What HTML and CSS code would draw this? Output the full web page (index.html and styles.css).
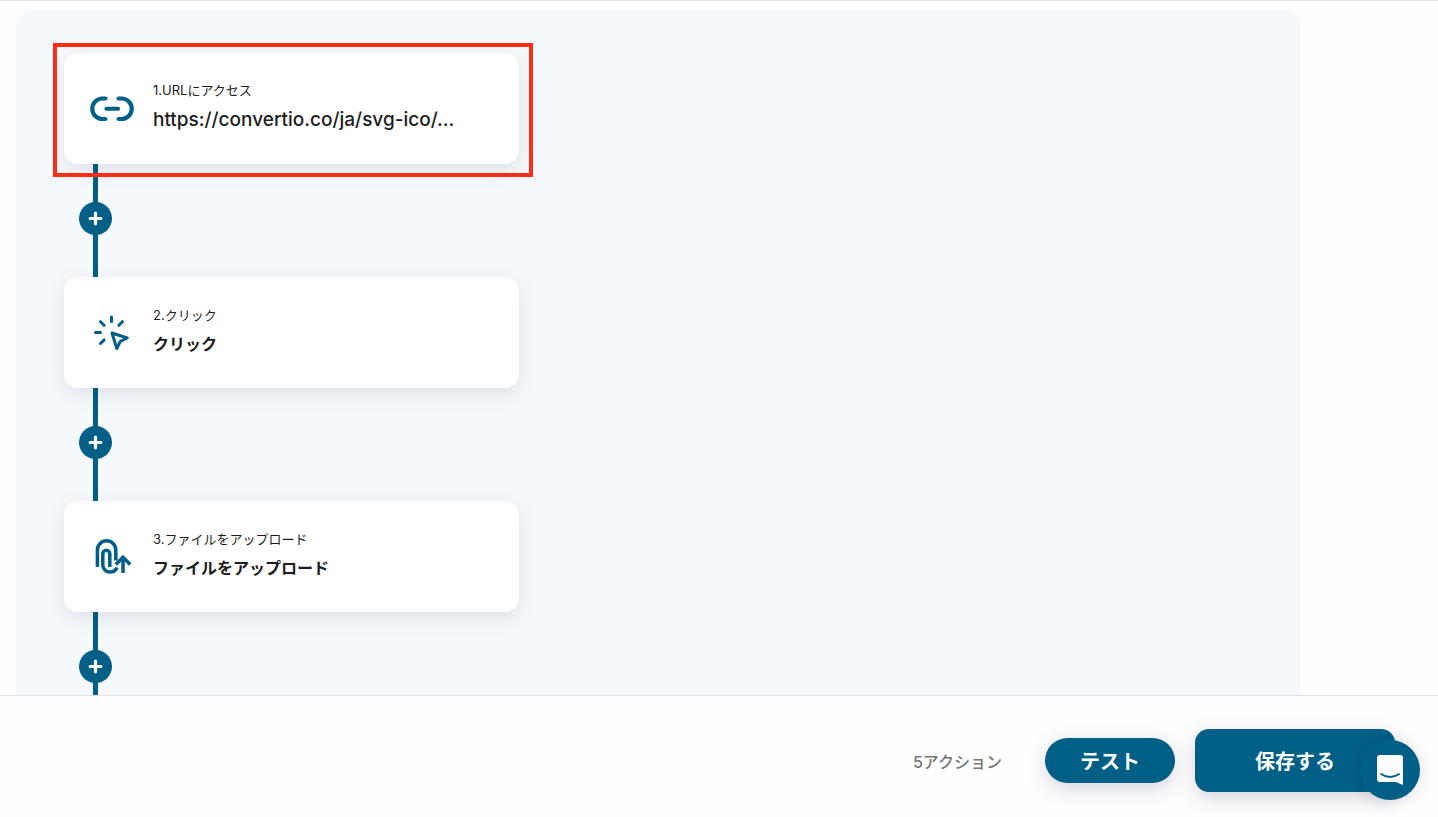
FILE: index.html
```html
<!DOCTYPE html>
<html lang="ja">
<head>
<meta charset="utf-8">
<meta name="viewport" content="width=device-width, initial-scale=1">
<title>ワークフロー</title>
<link rel="stylesheet" href="styles.css">
</head>
<body>
<main class="workspace">
  <section class="canvas">
    <ol class="steps">
      <li class="step">
        <article class="card card-selected">
          <svg class="card-icon" viewBox="0 0 48 48" fill="none" stroke="currentColor" stroke-width="4.200" stroke-linecap="round" aria-hidden="true">
            <path d="M17.500 13.500H14.500a10.250 10.250 0 0 0 0 20.500h3M30.500 13.500H33.500a10.250 10.250 0 0 1 0 20.500h-3M18.500 23.750h11.500"/>
          </svg>
          <div class="card-text">
            <p class="card-label">1.URLにアクセス</p>
            <h2 class="card-title card-url">https://convertio.co/ja/svg-ico/...</h2>
          </div>
        </article>
        <div class="connector"><button class="add" type="button" aria-label="アクションを追加"><svg viewBox="0 0 14 14" aria-hidden="true"><path d="M7 2v10M2 7h10"/></svg></button></div>
      </li>
      <li class="step">
        <article class="card">
          <svg class="card-icon" viewBox="0 0 48 48" fill="none" stroke="currentColor" stroke-width="3" stroke-linecap="round" stroke-linejoin="round" aria-hidden="true">
            <path d="M23.500 8v4.500M12.500 12.700l3.600 3.600M34.500 12.700l-3.600 3.600M7.500 23.500H12.500M12.500 34.500l3.600-3.600"/>
            <path d="M24 24l15.300 5-7 3.300L28.800 39.500z"/>
          </svg>
          <div class="card-text">
            <p class="card-label">2.クリック</p>
            <h2 class="card-title">クリック</h2>
          </div>
        </article>
        <div class="connector"><button class="add" type="button" aria-label="アクションを追加"><svg viewBox="0 0 14 14" aria-hidden="true"><path d="M7 2v10M2 7h10"/></svg></button></div>
      </li>
      <li class="step">
        <article class="card">
          <svg class="card-icon" viewBox="0 0 48 48" fill="none" stroke="currentColor" stroke-width="3.500" aria-hidden="true">
            <path d="M9.400 34V16.900a9.200 9.200 0 0 1 18.400 0v10.500"/>
            <path d="M21.800 34V20.800a3.500 3.500 0 0 0-7 0v11.200a7 7 0 0 0 7 7c3.300 0 6-1.500 7.300-4.500"/>
            <path d="M35 40V25M27.800 31.500l7.200-7.200 7.200 7.200"/>
          </svg>
          <div class="card-text">
            <p class="card-label">3.ファイルをアップロード</p>
            <h2 class="card-title">ファイルをアップロード</h2>
          </div>
        </article>
        <div class="connector"><button class="add" type="button" aria-label="アクションを追加"><svg viewBox="0 0 14 14" aria-hidden="true"><path d="M7 2v10M2 7h10"/></svg></button></div>
      </li>
    </ol>
  </section>
</main>
<footer class="actions">
  <p class="count">5アクション</p>
  <button class="button button-test" type="button">テスト</button>
  <button class="button button-save" type="button">保存する</button>
</footer>
<button class="chat" type="button" aria-label="チャットを開く">
  <svg viewBox="0 0 28 32" aria-hidden="true">
    <path fill="#fff" d="M4 1h20a3 3 0 0 1 3 3v27l-7-3H4a3 3 0 0 1-3-3V4a3 3 0 0 1 3-3z"/>
    <path d="M5 20c5.500 4 12.500 4 18 0" fill="none" stroke="#005f86" stroke-width="1.800" stroke-linecap="round"/>
  </svg>
</button>
</body>
</html>
```
FILE: styles.css
```css
* {
  box-sizing: border-box;
}

body {
  --brand: #005f86;
  display: flex;
  flex-direction: column;
  height: 100vh;
  margin: 0;
  overflow: hidden;
  border-top: 1px solid #e2e2e5;
  background: #fefefe;
  color: #1c1c20;
  font-family: Inter, "Noto Sans CJK JP", sans-serif;
}

p,
h2 {
  margin: 0;
}

button {
  border: 0;
  padding: 0;
  background: var(--brand);
  color: #fff;
  font: inherit;
  cursor: pointer;
}

.workspace {
  flex: 1;
  min-height: 0;
  overflow: hidden;
  padding: 10px 138px 0 16px;
}

.canvas {
  padding: 42px 48px;
  border-radius: 14px;
  background: #f5f9fc;
}

.steps {
  max-width: 455px;
  margin: 0;
  padding: 0;
  list-style: none;
}

.card {
  position: relative;
  display: flex;
  align-items: center;
  gap: 17px;
  height: 111px;
  padding: 0 24px;
  border-radius: 14px;
  background: #fff;
  box-shadow: 0 6px 20px rgba(30, 30, 40, 0.1);
}

.card-selected::after {
  position: absolute;
  z-index: 1;
  inset: -10px -14px -13px -11px;
  border: 4px solid #ff2d16;
  content: "";
}

.card-icon {
  flex: none;
  width: 48px;
  height: 48px;
  color: var(--brand);
}

.card-text {
  padding-bottom: 2px;
}

.card-label {
  font-size: 13px;
  line-height: 24px;
}

.card-title {
  font-size: 16px;
  font-weight: 700;
  line-height: 34px;
}

.card-url {
  padding-top: 1px;
  font-size: 19px;
  font-weight: 500;
}

.connector {
  display: flex;
  align-items: center;
  justify-content: center;
  width: 63px;
  height: 113px;
  padding-bottom: 4px;
  background: linear-gradient(var(--brand), var(--brand)) center / 5px 100% no-repeat;
}

.add {
  display: grid;
  flex: none;
  place-items: center;
  width: 33px;
  height: 33px;
  border-radius: 50%;
}

.add svg {
  width: 15px;
  height: 15px;
  fill: none;
  stroke: #fff;
  stroke-width: 3;
  stroke-linecap: round;
}

.actions {
  display: flex;
  align-items: center;
  justify-content: flex-end;
  padding: 33px 43px 25px;
  border-top: 1px solid #e2e2e8;
}

.count {
  margin-right: 43px;
  color: #777;
  font-size: 16px;
  font-weight: 500;
}

.button {
  font-size: 20px;
  font-weight: 700;
  box-shadow: 0 6px 20px rgba(40, 20, 80, 0.18);
}

.button-test {
  width: 130px;
  height: 45px;
  margin-right: 20px;
  border-radius: 23px;
}

.button-save {
  width: 200px;
  height: 63px;
  border-radius: 14px;
}

.chat {
  position: fixed;
  right: 18px;
  bottom: 17px;
  display: grid;
  place-items: center;
  width: 60px;
  height: 60px;
  border-radius: 50%;
  box-shadow: 0 2px 16px rgba(40, 20, 80, 0.14);
}

.chat svg {
  width: 28px;
  height: 32px;
}
```
